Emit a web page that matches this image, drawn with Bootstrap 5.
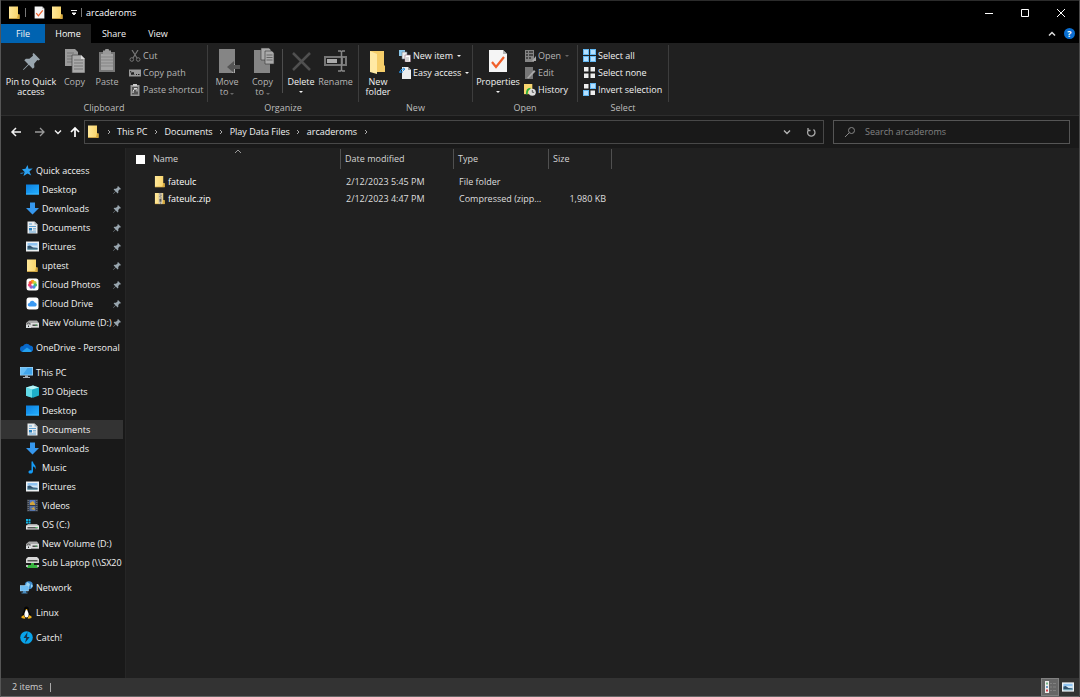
<!DOCTYPE html>
<html lang="en" data-bs-theme="dark">
<head>
<meta charset="utf-8">
<meta name="viewport" content="width=device-width, initial-scale=1">
<title>arcaderoms</title>
<link rel="stylesheet" href="https://cdn.jsdelivr.net/npm/bootstrap@5.3.0/dist/css/bootstrap.min.css">
<style>
body{font-family:"Open Sans","Noto Sans",sans-serif;font-size:9px;line-height:10px;color:#f2f2f2;background:#191919}
.explorer{border-left:1px solid #555;border-right:1px solid #4a4a4a}
svg{display:block;flex:none}
button,input{font:inherit;color:inherit}
button{background:none;border:0;padding:0}
a{color:inherit;text-decoration:none}
.i8{width:8px;height:8px}.i12{width:12px;height:12px}.i13{width:13px;height:13px}.i28{width:28px;height:28px}
.titlebar{height:24px;background:#000;border-top:1px solid #2b2b2b;padding-left:7px}
.titlebar h1{font-size:9px;line-height:13px;margin:0;font-weight:400}
.quick-tools{gap:6px;padding:0 3px 0 8px}
.tick-bar{width:1px;height:9px;background:#777}
.caption-btn{width:36px;height:23px;display:grid;place-items:center}
.tabbar{height:19px;background:#000}
.tabbar .nav-link{border:0;border-radius:0;padding:0;height:19px;line-height:19px;color:#f2f2f2;width:46px;text-align:center}
.tabbar .nav-link.active{background:#202020;color:#fff}
.tabbar .file-tab{background:#0063b1;width:44px}
.tabbar .view-tab{width:42px}
.help-btn{background:#0a6ed1;width:11px;height:11px}
.ribbon{background:#202020;height:73px;border-bottom:1px solid #2d2d2d}
.ribbon-group{border-right:1px solid #3d3d3d;height:57px;margin-top:2px;position:relative;padding-top:2px}
.group-name{position:absolute;top:58px;left:0;right:0;text-align:center;color:#bdbdbd}
.big-btn{display:flex;flex-direction:column;align-items:center;line-height:10px;white-space:nowrap;height:53px}
.big-btn svg{margin-bottom:2px}
.w27{width:27px}.w33{width:33px}.w36{width:36px}.w38{width:38px}.w46{width:46px}.w60{width:60px}
.small-btn{display:flex;align-items:center;gap:2px;height:17px;white-space:nowrap}
.off{color:#b5b5b5}
.caret{display:inline-block;border:2px solid transparent;border-top-color:currentColor;border-bottom:0;margin-left:2px}
.caret.below{margin:4px 0 0}
.dimcaret{color:#666}
.inner-sep{width:1px;height:44px;background:#4d4d4d;margin:2px 0 0 3px}
.organize-group{padding-right:6px}
.clip-col{width:81px;padding-left:3px}
.new-col{width:75px;padding-left:2px}
.open-group{padding-left:2px}
.open-col{width:56px;padding-left:3px}
.select-group{padding-left:5px;width:91px}
.navrow{height:32px;padding:4px 9px 5px 0}
.nav-arrows{width:83px;padding-left:9px}
.nav-arrows button+button{margin-left:8px}
.nav-arrows .fwd{margin-left:12px!important}
.address{border:1px solid #484848;height:24px;padding-left:2px}
.address ol{list-style:none;margin:0;padding:0}
.crumb-sep{width:17px;display:grid;place-items:center;color:#aaa}
.addr-btn{width:24px;height:22px;display:grid;place-items:center}
.searchbox{width:237px;border:1px solid #555;height:24px;margin-left:9px;padding-left:11px}
.searchbox input{background:none;border:0;outline:0;padding:0;height:20px}
.searchbox input::placeholder{color:#828282;opacity:1}
.sidebar{width:125px;padding:13px 0 0;border-right:1px solid #262626}
.sidebar ul{list-style:none;margin:0 0 6px;padding:0}
.sidebar a{display:flex;align-items:center;height:19px;line-height:15px;gap:3px;padding-left:19px;margin-right:2px;overflow:hidden;white-space:nowrap}
.sidebar .sub a{padding-left:25px}
.sidebar .chosen{background:#333}
.sidebar .pinned span{flex:1 1 0;overflow:hidden}
.sidebar .pinned svg:last-child{margin:0 2px 0 -3px}
.content-pane{background:#202020;padding-top:1px;position:relative}
.files{border-collapse:separate;border-spacing:0;table-layout:fixed;width:486px;color:#dedede}
.files th{font-weight:400;height:20px;line-height:20px;padding:0 0 0 4px;color:#d5d5d5;border-right:1px solid #505050}
.files th:first-child{padding-left:10px}
.files td{padding:0 5px;height:17px;line-height:17px;white-space:nowrap;overflow:hidden;text-overflow:ellipsis}
.files td:first-child{padding-left:28px}
.files td a{gap:2px}
.files tr:first-child td{padding-top:4px}
.files td.size-cell{padding-right:6px;text-align:right}
.c-name{width:215px}.c-date{width:113px}.c-type{width:95px}.c-size{width:63px}
.pickall{appearance:none;width:9px;height:9px;background:#fff;margin:0 8px 0 0}
.sortmark{position:absolute;left:108px;top:0}
.statusbar{height:19px;background:#333;border-bottom:1px solid #666;padding:0 2px 0 11px;color:#d0d0d0}
.statusbar .tick-bar{margin-left:7px;background:#aaa}
.view-btn{width:18px;height:18px;display:grid;place-items:center}
.view-btn.on{background:#666;border:1px solid #808080}
</style>
</head>
<body>
<svg width="0" height="0" class="position-absolute" aria-hidden="true">
<defs>
<linearGradient id="gold" x2="1"><stop stop-color="#ffe89a"/><stop offset="1" stop-color="#f8d266"/></linearGradient>
<linearGradient id="sky" x1="0" y1="0" x2="1" y2="1"><stop stop-color="#0b7fe0"/><stop offset="1" stop-color="#25b0ff"/></linearGradient>
<symbol id="folder" viewBox="0 0 13 13"><path d="M1 .5h9v8h1.500v4H1z" fill="url(#gold)"/><path d="M10 8.500l1.500 0v4H9z" fill="#d9a93a"/><path d="M1 12h10.500v.8H1z" fill="#dcae45"/></symbol>
<symbol id="zip" viewBox="0 0 13 13"><use href="#folder"/><path d="M5 .5h4v12H5z" fill="#c9c2ad"/><path d="M6 1h1v1H6zM7 2.500h1v1H7zM6 4h1v1H6zM7 5.500h1v1H7zM6 7h2v3H6zM6.500 11h1v1h-1z" fill="#555"/></symbol>
<symbol id="sheetcheck" viewBox="0 0 20 24"><path d="M1 1h14l4 4v18H1z" fill="#f5f5f5"/><path d="M15 1v4h4z" fill="#b4b4b4"/><path d="M4 13l4 5 8-10" fill="none" stroke="#f1602b" stroke-width="2.200"/></symbol>
<symbol id="pin" viewBox="0 0 16 16"><path d="M10 0l6 6-1.500 1-1-.4L10.500 10l.2 3.300-1.500 1.500-3.700-3.700L.5 16 0 15.500l4.900-5L1.200 6.800l1.500-1.500L6 5.500 9.400 2.500 9 1z" fill="#98a5ae"/></symbol>
<symbol id="pages" viewBox="0 0 20 24"><path d="M0 0h10l3 3v14H0z" fill="#9a9a9a"/><path d="M2 4h7M2 7h8M2 10h8M2 13h8" stroke="#747474"/><path d="M7 6h9l4 4v14H7z" fill="#aaa" stroke="#444" stroke-width=".7"/><path d="M16 6v4h4z" fill="#ddd"/><path d="M9 11h9M9 14h9M9 17h9M9 20h9" stroke="#777"/></symbol>
<symbol id="clipboard" viewBox="0 0 16 24"><path d="M0 3h16v20H0z" fill="#777"/><path d="M2 5h12v16H2z" fill="#a4a4a4"/><path d="M4 1.500h2a2 2 0 014 0h2v4H4z" fill="#999"/><path d="M2 8h12M2 11h12M2 14h12M2 17h12" stroke="#858585"/></symbol>
<symbol id="doc" viewBox="0 0 13 13"><path d="M1.500.5h7l3 3v9h-10z" fill="#e9edf0"/><path d="M8.500.5v3h3z" fill="#a4afb8"/><path d="M3 3h3M3 5.500h7M3 11h7" stroke="#5d9fd2"/><path d="M3 7h3v2.500H3z" fill="#287fbd"/><path d="M7 7.500h3M7 9h3" stroke="#71a3c8" stroke-width=".8"/></symbol>
<symbol id="desktop" viewBox="0 0 13 13"><path d="M0 1.500h13v10H0z" fill="url(#sky)"/><path d="M0 10.500h13v1H0z" fill="#3db9ff"/></symbol>
<symbol id="down" viewBox="0 0 13 13"><path d="M4 .5h5v5.500h4l-6.500 6.500L0 6h4z" fill="#3698ee"/></symbol>
<symbol id="picture" viewBox="0 0 13 13"><path d="M0 1.500h13V11.500H0z" fill="#eef1f3"/><path d="M1.500 3h10v7h-10z" fill="#8fc4f3"/><path d="M1.500 5.500h10v2h-10z" fill="#d4e8f4"/><path d="M1.500 6l2.500-.5L7 7.500l4.500.5v1h-10z" fill="#31536f"/><path d="M1.500 8.700h10V10h-10z" fill="#6f9fae"/></symbol>
<symbol id="drive" viewBox="0 0 13 13"><path d="M2 6h9l2 2H0z" fill="#aaa"/><path d="M0 7.500h13v4H0z" fill="#e5e5e5"/><path d="M1.500 9h10v1.500h-10z" fill="#555"/><path d="M9.500 9h2v1h-2z" fill="#4fd36b"/></symbol>
<symbol id="driveu" viewBox="0 0 13 13"><path d="M3 4.500h8l2 2.500v4.500H0V7z" fill="#a9a9a9"/><path d="M5 7h8v4.500H5z" fill="#dedede"/><path d="M6.500 8.500h5V10h-5z" fill="#4b4b4b"/><path d="M9.500 8.500h1.500v1H9.500z" fill="#4fd36b"/><path d="M0 8.500h5v3.500H0z" fill="#d9dcde"/><path d="M1 8.500a1.500 1.500 0 013 0" fill="none" stroke="#555"/><path d="M2 9.500h1v1.500H2z" fill="#333"/></symbol>
<symbol id="star" viewBox="0 0 13 13"><path d="M7.500 1l1 3.700 4.200-.1-3.300 2.800 1.800 4.200-3.700-2L3.500 12l1.100-4L2 5.200l3.500-.5z" fill="#2ba1f2"/><path d="M0 9l4-.8-1 1.300-2 .5zM1 12l2-1.500" fill="#2577b5"/></symbol>
<symbol id="photos" viewBox="0 0 13 13"><rect x=".5" y=".5" width="12" height="12" rx="2.500" fill="#fff"/><circle cx="6.500" cy="3.700" r="2" fill="#ff9d1c"/><circle cx="8.800" cy="4.700" r="1.800" fill="#c3d73c"/><circle cx="9.300" cy="7" r="1.800" fill="#48bc77"/><circle cx="7.800" cy="9" r="1.800" fill="#458fe0"/><circle cx="5.200" cy="9" r="1.800" fill="#9362ce"/><circle cx="3.700" cy="7" r="1.800" fill="#ed4179"/><circle cx="4.300" cy="4.700" r="1.700" fill="#f2533e"/></symbol>
<symbol id="icdrive" viewBox="0 0 13 13"><rect x=".5" y=".5" width="12" height="12" rx="2.500" fill="#fff"/><path d="M3.500 9.500a1.700 1.700 0 010-3.500 2.800 2.800 0 015.300-.5 2.100 2.100 0 01.7 4z" fill="#3b9af4"/></symbol>
<symbol id="onedrive" viewBox="0 0 13 13"><path d="M3 11a3 3 0 010-6 4 4 0 017-.5A3.200 3.200 0 0110 11z" fill="#0868ca"/><path d="M2 10.500l5-4 5 3.500-1.500 1H3z" fill="#24a0ed"/></symbol>
<symbol id="pc" viewBox="0 0 13 13"><path d="M0 1h13v8.500H0z" fill="#a9d9f8"/><path d="M.7 1.700h11.600v7H.7z" fill="#41a5eb"/><path d="M.7 1.700h7l-5 7h-2z" fill="#69bff6"/><path d="M5 9.500h3V11h2v1H3v-1h2z" fill="#a5afb7"/></symbol>
<symbol id="cube" viewBox="0 0 13 13"><path d="M0 2.500L7 .5l6 2v8l-6 2.300-7-2z" fill="#1dafc9"/><path d="M0 2.500l6 2v8.300l-6-2z" fill="#62dbe8"/><path d="M0 2.500L7 .5l6 2-7 2z" fill="#b9f4f5"/></symbol>
<symbol id="music" viewBox="0 0 13 13"><path d="M5.500.5h1.500c0 3 4 3.500 2.300 8-.2-2-1-3-2.300-3v4.800c0 1.500-1.200 2.300-2.500 2.300S2.500 12 2.500 11s1.300-2 3-1.500z" fill="#159bf5"/></symbol>
<symbol id="video" viewBox="0 0 13 13"><path d="M1 .5h11v12H1z" fill="#343b45"/><path d="M3.500 1h6v5h-6z" fill="#567abf"/><path d="M3.500 7h6v5h-6z" fill="#5573a8"/><path d="M4 4l3-2 2 3v1H4zM5 10l3-2 1 3z" fill="#d3a53b"/><path d="M2.200 1v11M10.800 1v11" stroke="#888" stroke-dasharray="1 1"/></symbol>
<symbol id="osdrive" viewBox="0 0 13 13"><use href="#drive"/><path d="M0 1h2v2H0zM2.500 1h2v2h-2zM0 3.500h2v2H0zM2.500 3.500h2v2h-2z" fill="#14b7e9"/></symbol>
<symbol id="netdrive" viewBox="0 0 13 13"><path d="M2 1h9l2 2v4H0V3z" fill="#d7d7d7"/><path d="M1.500 4h10v1.500h-10z" fill="#555"/><path d="M5 7h3v2h4v3H1V9h4z" fill="#36b43f"/><path d="M0 9h2v2H0zM11 9h2v2h-2z" fill="#bbb"/></symbol>
<symbol id="network" viewBox="0 0 13 13"><circle cx="8.800" cy="4.300" r="4" fill="#3e8ccd"/><path d="M7 1l3 2-1 3-3-2zM11 3l2 2-2 2z" fill="#9cd6f4"/><path d="M0 4.500h8.500v5.500H0z" fill="#6dbcf2" stroke="#b7def5" stroke-width=".5"/><path d="M3 10h3v1.500h1.500v1h-6v-1H3z" fill="#4a8cbf"/></symbol>
<symbol id="linux" viewBox="0 0 13 13"><path d="M6.500.5c3 0 2 3 3 5s2.500 5 0 6.500h-6c-2.500-1.500-1-4.500 0-6.500s0-5 3-5z" fill="#050505"/><path d="M6.500 3.500c1 0 1 1.500 1.800 3.300.8 2 .4 4.700-1.800 4.700S4 8.800 4.700 6.800C5.500 5 5.500 3.500 6.500 3.500z" fill="#fff"/><path d="M5.500 3h2l-1 1.500zM1.500 10.500l2-1.500L5.500 12l-1 .8-3-.8zM11.500 10.500l-2-1.500-2 3 1 .8 3-.8z" fill="#efae19"/></symbol>
<symbol id="catch" viewBox="0 0 13 13"><circle cx="6.500" cy="6.500" r="6.300" fill="#08a4ea"/><path d="M7.500 1L3.500 7h2.700L5 12l4.700-6H7z" fill="#17334a"/></symbol>
<symbol id="chev" viewBox="0 0 8 8"><path d="M1 2.500l3 3 3-3" fill="none" stroke="currentColor" stroke-width="1.400"/></symbol>
<symbol id="right" viewBox="0 0 8 8"><path d="M3 2l2 2-2 2" fill="none" stroke="currentColor"/></symbol>
<symbol id="arrow" viewBox="0 0 12 12"><path d="M11 6H2M6 2L2 6l4 4" fill="none" stroke="currentColor" stroke-width="1.500"/></symbol>
</defs>
</svg>

<div class="explorer d-flex flex-column vh-100 overflow-hidden">
<header class="titlebar d-flex align-items-center">
  <svg class="i13"><use href="#folder"/></svg><span class="tick-bar ms-1"></span>
  <div class="quick-tools d-flex align-items-center">
    <button aria-label="Properties"><svg width="11" height="13"><use href="#sheetcheck"/></svg></button>
    <button aria-label="New folder"><svg class="i13"><use href="#folder"/></svg></button>
    <button aria-label="Customize toolbar"><svg class="i8" viewBox="0 0 8 8"><path d="M1 1.500h6M2 4h4L4 6z" stroke="#eee" fill="#eee"/></svg></button>
  </div>
  <span class="tick-bar me-1"></span><h1>arcaderoms</h1>
  <div class="d-flex ms-auto">
    <button class="caption-btn" aria-label="Minimize"><svg class="i8" viewBox="0 0 8 8"><path d="M0 4.500h8" stroke="#fff"/></svg></button>
    <button class="caption-btn" aria-label="Maximize"><svg class="i8" viewBox="0 0 8 8"><path d="M.5.5h7v7h-7z" stroke="#fff" fill="none"/></svg></button>
    <button class="caption-btn" aria-label="Close"><svg class="i8" viewBox="0 0 8 8"><path d="M0 0l8 8M8 0L0 8" stroke="#fff"/></svg></button>
  </div>
</header>
<nav class="tabbar nav d-flex" aria-label="Ribbon tabs">
  <button class="nav-link file-tab">File</button><button class="nav-link active">Home</button><button class="nav-link">Share</button><button class="nav-link view-tab">View</button>
  <div class="d-flex align-items-center ms-auto gap-2 me-1">
    <button aria-label="Collapse ribbon"><svg class="i8" viewBox="0 0 8 8"><path d="M1 5.500l3-3 3 3" fill="none" stroke="#ddd" stroke-width="1.500"/></svg></button>
    <button aria-label="Help" class="help-btn rounded-circle text-white fw-bold">?</button>
  </div>
</nav>

<section class="ribbon d-flex" aria-label="Home ribbon">
  <div class="ribbon-group d-flex">
    <button class="big-btn w60"><svg class="i28" viewBox="0 0 28 28"><use href="#pin" x="6" y="6" width="17" height="17"/></svg>Pin to Quick<br>access</button>
    <button class="big-btn w27 off"><svg class="i28" viewBox="0 0 28 28"><use href="#pages" x="4" y="2" width="20" height="24"/></svg>Copy</button>
    <button class="big-btn w38 off"><svg class="i28" viewBox="0 0 28 28"><use href="#clipboard" x="6" y="2" width="16" height="24"/></svg>Paste</button>
    <div class="clip-col off">
      <button class="small-btn"><svg class="i12" viewBox="0 0 12 12"><path d="M3 0l5 8M9 0L4 8" stroke="#777" stroke-width="1.200"/><circle cx="2.800" cy="9.500" r="1.800" fill="none" stroke="#777"/><circle cx="9.200" cy="9.500" r="1.800" fill="none" stroke="#777"/></svg>Cut</button>
      <button class="small-btn"><svg class="i12" viewBox="0 0 12 12"><path d="M0 2.500h12v7H0z" fill="#999"/><path d="M1.500 4l1.500 4 1-3 1 3M7 7.500h1M9 7.500h1.500" stroke="#222" fill="none"/></svg>Copy path</button>
      <button class="small-btn"><svg class="i12" viewBox="0 0 12 12"><path d="M1.500 1h9v11h-9z" fill="#999"/><path d="M4 0h4v2H4z" fill="#ccc"/><path d="M3 3h6v7.500H3z" fill="#555"/><path d="M4 9c0-3 1-4 3-4M5 4.500h3v3" stroke="#ddd" fill="none"/></svg>Paste shortcut</button>
    </div>
    <div class="group-name">Clipboard</div>
  </div>
  <div class="ribbon-group organize-group d-flex">
    <button class="big-btn w38 off"><svg class="i28" viewBox="0 0 28 28"><path d="M6 2h16v24H6z" fill="#858585"/><path d="M20 17h2v9h-3z" fill="#aaa"/><path d="M14 20l7-6v4h6v4h-6v4z" fill="#555"/></svg>Move<span>to<i class="caret dimcaret"></i></span></button>
    <button class="big-btn w33 off"><svg class="i28" viewBox="0 0 28 28"><path d="M5 3h16v23H5z" fill="#858585"/><path d="M12 1h8l2 2v10H12z" fill="#aaa" stroke="#333" stroke-width=".6"/><path d="M16 4h7l2 2v11h-9z" fill="#aaa" stroke="#333" stroke-width=".6"/><path d="M17.500 8h6M17.500 10.500h6M17.500 13h6" stroke="#666"/></svg>Copy<span>to<i class="caret dimcaret"></i></span></button>
    <span class="inner-sep"></span>
    <button class="big-btn w36"><svg class="i28" viewBox="0 0 28 28"><path d="M6 6l17 17M23 6L6 23" stroke="#505050" stroke-width="2.500"/></svg>Delete<i class="caret below"></i></button>
    <button class="big-btn w33 off"><svg class="i28" viewBox="0 0 28 28"><path d="M3 10h17v8H3z" fill="none" stroke="#777" stroke-width="2"/><path d="M5 12h10v4H5z" fill="#aaa"/><path d="M20 10h4v8h-4" fill="none" stroke="#777" stroke-width="2"/><path d="M16 4h2.500l1 1 1-1H23M19.500 5v18M16 24h2.500l1-1 1 1H23" stroke="#888" stroke-width="1.500" fill="none"/></svg>Rename</button>
    <div class="group-name">Organize</div>
  </div>
  <div class="ribbon-group d-flex">
    <button class="big-btn w38"><svg class="i28" viewBox="0 0 28 28"><path d="M6 4h14v14l1 1v6H6z" fill="#f6ce6a"/><path d="M6 4l7 3v20l-7-2z" fill="#ffe9a4"/></svg>New<br>folder</button>
    <div class="new-col">
      <button class="small-btn"><svg class="i12" viewBox="0 0 12 12"><path d="M0 0h6v6H0z" fill="#8ac6e9"/><path d="M3 2h5v7H3z" fill="#eee" stroke="#678" stroke-width=".6"/><path d="M6 5h5.500v7H6z" fill="#fff" stroke="#867" stroke-width=".6"/><path d="M7 8h3M7 10h3" stroke="#aaa"/></svg>New item<i class="caret"></i></button>
      <button class="small-btn"><svg class="i12" viewBox="0 0 12 12"><path d="M3 0h6l3 3v9H3z" fill="#eee"/><path d="M9 0v3h3z" fill="#9b9b9b"/><path d="M1 6c0-3 1-4 4-4M0 5h4M4 1l2 1-2 2" stroke="#278fe0" fill="none"/></svg>Easy access<i class="caret"></i></button>
    </div>
    <div class="group-name">New</div>
  </div>
  <div class="ribbon-group open-group d-flex">
    <button class="big-btn w46"><svg class="i28" viewBox="0 0 28 28"><use href="#sheetcheck" x="4" y="2" width="20" height="24"/></svg>Properties<i class="caret below"></i></button>
    <div class="open-col">
      <button class="small-btn off"><svg class="i12" viewBox="0 0 12 12"><path d="M1 0h9v12H1z" fill="#858585"/><path d="M2 2h2M2 5h2M2 8h2M5 2h4M5 5h4M5 8h2" stroke="#333" stroke-width="1.500"/><path d="M8 11l4-5v5z" fill="#aaa"/></svg>Open<i class="caret dimcaret"></i></button>
      <button class="small-btn off"><svg class="i12" viewBox="0 0 12 12"><path d="M1 0h8v12H1z" fill="#777"/><path d="M3 11l7-8 1.500 1.500-7 7z" fill="#aaa"/></svg>Edit</button>
      <button class="small-btn"><svg class="i12" viewBox="0 0 13 13"><path d="M0 0h9v11H0z" fill="#f7d56f"/><path d="M3 11c0-5 2-6 4-6" stroke="#27ad38" stroke-width="2" fill="none"/><circle cx="9" cy="9" r="3.800" fill="#ddd"/><path d="M9 6.500V9h2" stroke="#555" fill="none"/></svg>History</button>
    </div>
    <div class="group-name">Open</div>
  </div>
  <div class="ribbon-group select-group">
    <button class="small-btn"><svg class="i13" viewBox="0 0 13 13"><path d="M0 0h6v6H0zM7 0h6v6H7zM0 7h6v6H0zM7 7h6v6H7z" fill="#62b8f3"/><path d="M1 1h4v4H1zM8 1h4v4H8zM1 8h4v4H1zM8 8h4v4H8z" fill="#b5e0ff"/></svg>Select all</button>
    <button class="small-btn"><svg class="i13" viewBox="0 0 13 13"><path d="M1 1h4.500v4.500H1zM7.500 1H12v4.500H7.500zM1 7.500h4.500V12H1zM7.500 7.500H12V12H7.500z" fill="#eee"/></svg>Select none</button>
    <button class="small-btn"><svg class="i13" viewBox="0 0 13 13"><path d="M1 1h4.500v4.500H1zM7.500 7.500H12V12H7.500z" fill="#eee"/><path d="M7 0h6v6H7zM0 7h6v6H0z" fill="#62b8f3"/><path d="M8 1h4v4H8zM1 8h4v4H1z" fill="#b5e0ff"/></svg>Invert selection</button>
    <div class="group-name">Select</div>
  </div>
</section>

<div class="navrow d-flex align-items-center">
  <div class="nav-arrows d-flex align-items-center">
    <button aria-label="Back"><svg class="i12"><use href="#arrow"/></svg></button>
    <button aria-label="Forward" class="fwd"><svg class="i12" viewBox="0 0 12 12"><path d="M1 6h9M6 2l4 4-4 4" fill="none" stroke="#999" stroke-width="1.300"/></svg></button>
    <button aria-label="Recent locations"><svg class="i8"><use href="#chev"/></svg></button>
    <button aria-label="Up"><svg class="i12" viewBox="0 0 12 12"><path d="M5 11V2M1 6l4-4 4 4" fill="none" stroke="#fff" stroke-width="1.700"/></svg></button>
  </div>
  <nav class="address d-flex align-items-center flex-grow-1" aria-label="Address">
    <svg class="i13"><use href="#folder"/></svg>
    <ol class="d-flex">
      <li class="d-flex"><span class="crumb-sep"><svg class="i8"><use href="#right"/></svg></span><a href="#">This PC</a></li>
      <li class="d-flex"><span class="crumb-sep"><svg class="i8"><use href="#right"/></svg></span><a href="#">Documents</a></li>
      <li class="d-flex"><span class="crumb-sep"><svg class="i8"><use href="#right"/></svg></span><a href="#">Play Data Files</a></li>
      <li class="d-flex"><span class="crumb-sep"><svg class="i8"><use href="#right"/></svg></span><a href="#">arcaderoms</a><span class="crumb-sep"><svg class="i8"><use href="#right"/></svg></span></li>
    </ol>
    <button class="addr-btn ms-auto off" aria-label="Previous locations"><svg class="i8"><use href="#chev"/></svg></button>
    <button class="addr-btn" aria-label="Refresh"><svg width="10" height="10" viewBox="0 0 10 10"><path d="M7.500 2.500A3.700 3.700 0 112.500 3M2 1v2.500h2.500" fill="none" stroke="#aaa" stroke-width="1.300"/></svg></button>
  </nav>
  <div class="searchbox d-flex align-items-center flex-shrink-0">
    <svg class="i12 me-2" viewBox="0 0 12 12"><circle cx="6.500" cy="4.500" r="3" fill="none" stroke="#888"/><path d="M4.300 6.700L0 11" stroke="#888"/></svg>
    <input type="search" class="flex-grow-1" aria-label="Search arcaderoms" placeholder="Search arcaderoms">
  </div>
</div>

<div class="d-flex flex-grow-1 overflow-hidden">
  <nav class="sidebar flex-shrink-0 overflow-hidden" aria-label="Folders">
    <ul>
      <li><a href="#"><svg class="i13"><use href="#star"/></svg>Quick access</a></li>
      <li class="sub"><a href="#" class="pinned"><svg class="i13"><use href="#desktop"/></svg><span>Desktop</span><svg class="i8"><use href="#pin"/></svg></a></li>
      <li class="sub"><a href="#" class="pinned"><svg class="i13"><use href="#down"/></svg><span>Downloads</span><svg class="i8"><use href="#pin"/></svg></a></li>
      <li class="sub"><a href="#" class="pinned"><svg class="i13"><use href="#doc"/></svg><span>Documents</span><svg class="i8"><use href="#pin"/></svg></a></li>
      <li class="sub"><a href="#" class="pinned"><svg class="i13"><use href="#picture"/></svg><span>Pictures</span><svg class="i8"><use href="#pin"/></svg></a></li>
      <li class="sub"><a href="#" class="pinned"><svg class="i13"><use href="#folder"/></svg><span>uptest</span><svg class="i8"><use href="#pin"/></svg></a></li>
      <li class="sub"><a href="#" class="pinned"><svg class="i13"><use href="#photos"/></svg><span>iCloud Photos</span><svg class="i8"><use href="#pin"/></svg></a></li>
      <li class="sub"><a href="#" class="pinned"><svg class="i13"><use href="#icdrive"/></svg><span>iCloud Drive</span><svg class="i8"><use href="#pin"/></svg></a></li>
      <li class="sub"><a href="#" class="pinned"><svg class="i13"><use href="#driveu"/></svg><span>New Volume (D:)</span><svg class="i8"><use href="#pin"/></svg></a></li>
    </ul>
    <ul><li><a href="#"><svg class="i13"><use href="#onedrive"/></svg>OneDrive - Personal</a></li></ul>
    <ul>
      <li><a href="#"><svg class="i13"><use href="#pc"/></svg>This PC</a></li>
      <li class="sub"><a href="#"><svg class="i13"><use href="#cube"/></svg>3D Objects</a></li>
      <li class="sub"><a href="#"><svg class="i13"><use href="#desktop"/></svg>Desktop</a></li>
      <li class="sub"><a href="#" class="chosen" aria-current="true"><svg class="i13"><use href="#doc"/></svg>Documents</a></li>
      <li class="sub"><a href="#"><svg class="i13"><use href="#down"/></svg>Downloads</a></li>
      <li class="sub"><a href="#"><svg class="i13"><use href="#music"/></svg>Music</a></li>
      <li class="sub"><a href="#"><svg class="i13"><use href="#picture"/></svg>Pictures</a></li>
      <li class="sub"><a href="#"><svg class="i13"><use href="#video"/></svg>Videos</a></li>
      <li class="sub"><a href="#"><svg class="i13"><use href="#osdrive"/></svg>OS (C:)</a></li>
      <li class="sub"><a href="#"><svg class="i13"><use href="#driveu"/></svg>New Volume (D:)</a></li>
      <li class="sub"><a href="#"><svg class="i13"><use href="#netdrive"/></svg>Sub Laptop (\\SX20</a></li>
    </ul>
    <ul><li><a href="#"><svg class="i13"><use href="#network"/></svg>Network</a></li></ul>
    <ul><li><a href="#"><svg class="i13"><use href="#linux"/></svg>Linux</a></li></ul>
    <ul><li><a href="#"><svg class="i13"><use href="#catch"/></svg>Catch!</a></li></ul>
  </nav>
  <main class="content-pane flex-grow-1">
    <svg class="i8 sortmark" viewBox="0 0 8 8"><path d="M1 5l3-3 3 3" fill="none" stroke="#999"/></svg>
    <table class="files">
      <colgroup><col class="c-name"><col class="c-date"><col class="c-type"><col class="c-size"></colgroup>
      <thead><tr><th><div class="d-flex align-items-center"><input type="checkbox" class="pickall" aria-label="Select all items">Name</div></th><th>Date modified</th><th>Type</th><th>Size</th></tr></thead>
      <tbody>
        <tr><td><a href="#" class="d-flex align-items-center text-white"><svg width="12" height="13"><use href="#folder"/></svg>fateulc</a></td><td>2/12/2023 5:45 PM</td><td>File folder</td><td></td></tr>
        <tr><td><a href="#" class="d-flex align-items-center text-white"><svg width="12" height="13"><use href="#zip"/></svg>fateulc.zip</a></td><td>2/12/2023 4:47 PM</td><td>Compressed (zipped) Folder</td><td class="size-cell">1,980 KB</td></tr>
      </tbody>
    </table>
  </main>
</div>
<footer class="statusbar d-flex align-items-center">
  <span>2 items</span><span class="tick-bar"></span>
  <div class="d-flex ms-auto">
    <button class="view-btn on" aria-label="Details view"><svg class="i12" viewBox="0 0 12 12"><path d="M1 0h4v12H1z" fill="#eee"/><path d="M2 1.500h2v2H2z" fill="#77b588"/><path d="M2 5h2v2H2z" fill="#6d9bc5"/><path d="M2 8.500h2v2H2z" fill="#d8434c"/><path d="M6 2.500h2M9 2.500h3M6 6h2M9 6h3M6 9.500h2M9 9.500h3" stroke="#808080"/></svg></button>
    <button class="view-btn" aria-label="Thumbnail view"><svg class="i12"><use href="#picture"/></svg></button>
  </div>
</footer>
</div>
<script src="https://cdn.jsdelivr.net/npm/bootstrap@5.3.0/dist/js/bootstrap.bundle.min.js"></script>
</body>
</html>
